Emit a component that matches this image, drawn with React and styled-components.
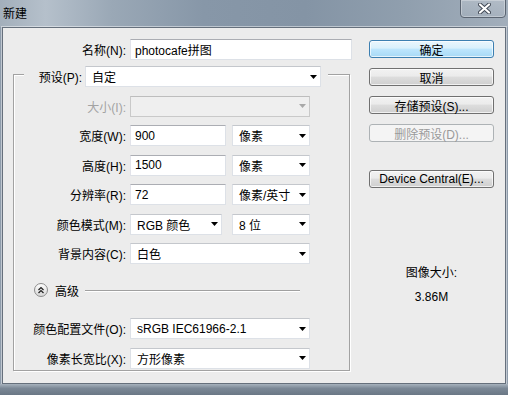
import styled, { createGlobalStyle } from "styled-components";

const GlobalStyle = createGlobalStyle`
  html, body {
    margin: 0;
    padding: 0;
  }
  body {
    font-family: "Liberation Sans", "Noto Sans CJK SC", sans-serif;
    font-size: 12px;
    color: #000;
  }
`;

const Window = styled.div`
  width: 508px;
  height: 395px;
  display: flex;
  flex-direction: column;
  background: #8e9cab;
  overflow: hidden;
`;

const TitleBar = styled.div`
  height: 27px;
  flex: none;
  display: flex;
  justify-content: space-between;
  align-items: flex-start;
  background: linear-gradient(
    90deg,
    #a3afbb 0%,
    #b5c0cb 9%,
    #9aa8b6 22%,
    #8797a8 40%,
    #8494a5 60%,
    #909fae 80%,
    #a2aebb 100%
  );
`;

const Title = styled.div`
  padding: 7px 0 0 3px;
  font-size: 12px;
  line-height: 14px;
`;

const CloseButton = styled.div`
  width: 46px;
  height: 19px;
  box-sizing: border-box;
  margin: -1px 2px 0 0;
  border: 1px solid #5a6471;
  border-radius: 0 0 4px 4px;
  box-shadow: inset 0 0 0 1px rgba(255, 255, 255, 0.3);
  background: linear-gradient(rgba(255, 255, 255, 0.18), rgba(255, 255, 255, 0.06));
  display: flex;
  align-items: center;
  justify-content: center;
  padding-left: 3px;
`;

const Body = styled.div`
  height: 357px;
  flex: none;
  margin: 0 2px;
  box-sizing: border-box;
  border: 1px solid #66707c;
  box-shadow: 0 0 0 1px rgba(255, 255, 255, 0.45);
  background: #ececec;
  display: flex;
`;

const BottomBand = styled.div`
  flex: 1;
  background: linear-gradient(#a7b2bd, #7b8896 40%, #6a7785);
`;

const LeftCol = styled.div`
  width: 350px;
  flex: none;
  box-sizing: border-box;
  padding: 11px 0 0 10px;
  display: flex;
  flex-direction: column;
`;

const NameRow = styled.div`
  display: grid;
  grid-template-columns: 113px 222px;
  column-gap: 4px;
  align-items: center;
  height: 21px;
`;

const Label = styled.div`
  text-align: right;
  white-space: nowrap;
  color: ${(p) => (p.$disabled ? "#a3a3a3" : "#000")};
`;

const TextBox = styled.div`
  height: 21px;
  width: ${(p) => p.$w}px;
  box-sizing: border-box;
  border: 1px solid #dde1e7;
  border-top-color: #abadb3;
  border-left-color: #e2e3ea;
  background: #fff;
  padding: 0 4px;
  display: flex;
  align-items: center;
  white-space: nowrap;
`;

// group box; the legend row sits over its top border
const Group = styled.div`
  margin-top: 14px;
  width: 337px;
  box-sizing: border-box;
  border: 1px solid #a2a2a2;
  box-shadow: inset 1px 1px 0 #fff, 1px 1px 0 #fff;
  padding-bottom: 1px;
  display: flex;
  flex-direction: column;
  gap: 8.5px;
`;

const Legend = styled.div`
  align-self: flex-start;
  margin: -9px 0 0 10px;
  padding: 0 7px 0 10px;
  background: #ececec;
  display: grid;
  grid-template-columns: 48px 236px;
  column-gap: 3px;
  align-items: center;
  height: 21px;
`;

const Row = styled.div`
  display: grid;
  grid-template-columns: 112px auto;
  column-gap: 4px;
  align-items: center;
  height: 21px;
`;

const Controls = styled.div`
  display: flex;
  gap: ${(p) => p.$gap}px;
`;

const Select = styled.div`
  height: 21px;
  width: ${(p) => p.$w}px;
  box-sizing: border-box;
  border: 1px solid ${(p) => (p.$disabled ? "#c9c9c9" : "#dde1e7")};
  border-top-color: ${(p) => (p.$disabled ? "#bdbdbd" : "#c4c7cc")};
  background: ${(p) => (p.$disabled ? "#efefef" : "#fff")};
  padding: 0 3px 0 6px;
  display: flex;
  align-items: center;
  justify-content: space-between;
  white-space: nowrap;
`;

const Advanced = styled.div`
  height: 21px;
  display: flex;
  align-items: center;
  padding-left: 20px;
  margin: 7px 49px 9px 0;
`;

const AdvancedText = styled.span`
  margin: 0 6px 0 7px;
`;

const Rule = styled.div`
  flex: 1;
  height: 1px;
  background: #a0a0a0;
  box-shadow: 0 1px 0 #fff;
`;

const RightCol = styled.div`
  width: 125px;
  flex: none;
  margin-left: 16px;
  padding-top: 12px;
  display: flex;
  flex-direction: column;
  gap: 10px;
`;

const Button = styled.div`
  height: 18px;
  box-sizing: border-box;
  border: 1px solid ${(p) => (p.$primary ? "#3c7fb1" : p.$disabled ? "#adb2b5" : "#707070")};
  border-radius: 3px;
  background: ${(p) =>
    p.$primary
      ? "linear-gradient(#eaf6fd 0%, #d9f0fc 45%, #bee6fd 50%, #a7d9f5 100%)"
      : p.$disabled
      ? "#f4f4f4"
      : "linear-gradient(#f2f2f2 0%, #ebebeb 45%, #dddddd 50%, #cfcfcf 100%)"};
  box-shadow: inset 0 0 0 1px rgba(255, 255, 255, ${(p) => (p.$disabled ? 0 : 0.7)});
  color: ${(p) => (p.$disabled ? "#9a9a9a" : "#000")};
  display: flex;
  align-items: center;
  justify-content: center;
  white-space: nowrap;
  margin-top: ${(p) => p.$push || 0}px;
`;

const Info = styled.div`
  margin-top: 67px;
  text-align: center;
  line-height: 16px;
`;

const InfoValue = styled.div`
  margin-top: 8px;
`;

const Arrow = ({ disabled }) => (
  <svg width="7" height="4" viewBox="0 0 7 4">
    <path d="M0 0h7L3.5 4z" fill={disabled ? "#a8a8a8" : "#000"} />
  </svg>
);

const CloseIcon = () => (
  <svg width="13" height="11" viewBox="0 0 13 11">
    <path d="M2 1.5l9 8M11 1.5l-9 8" stroke="#3e4652" strokeWidth="4" strokeLinecap="round" />
    <path d="M2 1.5l9 8M11 1.5l-9 8" stroke="#fff" strokeWidth="2.2" strokeLinecap="round" />
  </svg>
);

const CollapseIcon = () => (
  <svg width="14" height="14" viewBox="0 0 14 14">
    <defs>
      <linearGradient id="cg" x1="0" y1="0" x2="0" y2="1">
        <stop offset="0" stopColor="#ffffff" />
        <stop offset="1" stopColor="#d6d6d6" />
      </linearGradient>
    </defs>
    <circle cx="7" cy="7" r="6.5" fill="url(#cg)" stroke="#8c8c8c" />
    <path d="M4.5 7L7 4.6 9.5 7M4.5 10L7 7.6 9.5 10" fill="none" stroke="#222" strokeWidth="1.3" />
  </svg>
);

const Field = ({ label, disabled, gap = 6, children }) => (
  <Row>
    <Label $disabled={disabled}>{label}</Label>
    <Controls $gap={gap}>{children}</Controls>
  </Row>
);

const Drop = ({ w, disabled, children }) => (
  <Select $w={w} $disabled={disabled}>
    <span>{children}</span>
    <Arrow disabled={disabled} />
  </Select>
);

export default function App() {
  return (
    <>
      <GlobalStyle />
      <Window>
        <TitleBar>
          <Title>新建</Title>
          <CloseButton>
            <CloseIcon />
          </CloseButton>
        </TitleBar>
        <Body>
          <LeftCol>
            <NameRow>
              <Label>名称(N):</Label>
              <TextBox $w={222}>photocafe拼图</TextBox>
            </NameRow>
            <Group>
              <Legend>
                <Label>预设(P):</Label>
                <Drop w={236}>自定</Drop>
              </Legend>
              <Field label="大小(I):" disabled>
                <Drop w={180} disabled />
              </Field>
              <Field label="宽度(W):">
                <TextBox $w={96}>900</TextBox>
                <Drop w={78}>像素</Drop>
              </Field>
              <Field label="高度(H):">
                <TextBox $w={96}>1500</TextBox>
                <Drop w={78}>像素</Drop>
              </Field>
              <Field label="分辨率(R):">
                <TextBox $w={96}>72</TextBox>
                <Drop w={78}>像素/英寸</Drop>
              </Field>
              <Field label="颜色模式(M):" gap={10}>
                <Drop w={92}>RGB 颜色</Drop>
                <Drop w={78}>8 位</Drop>
              </Field>
              <Field label="背景内容(C):">
                <Drop w={180}>白色</Drop>
              </Field>
              <Advanced>
                <CollapseIcon />
                <AdvancedText>高级</AdvancedText>
                <Rule />
              </Advanced>
              <Field label="颜色配置文件(O):">
                <Drop w={180}>sRGB IEC61966-2.1</Drop>
              </Field>
              <Field label="像素长宽比(X):">
                <Drop w={180}>方形像素</Drop>
              </Field>
            </Group>
          </LeftCol>
          <RightCol>
            <Button $primary>确定</Button>
            <Button>取消</Button>
            <Button>存储预设(S)...</Button>
            <Button $disabled>删除预设(D)...</Button>
            <Button $push={18}>Device Central(E)...</Button>
            <Info>
              图像大小:
              <InfoValue>3.86M</InfoValue>
            </Info>
          </RightCol>
        </Body>
        <BottomBand />
      </Window>
    </>
  );
}
